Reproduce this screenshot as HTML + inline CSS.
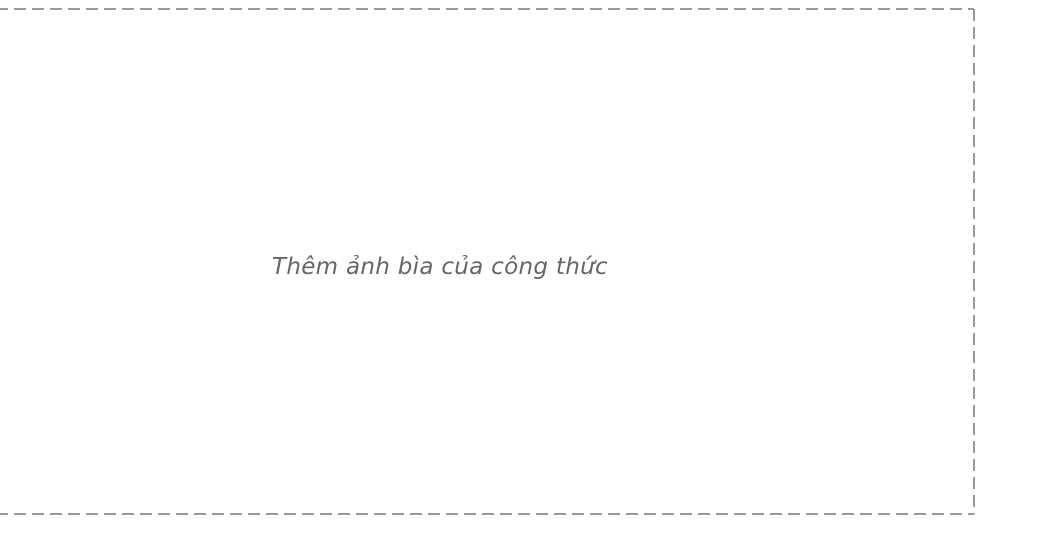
<!DOCTYPE html>
<html><head><style>
html,body{margin:0;padding:0;background:#fff;width:1061px;height:539px;overflow:hidden}
svg{position:absolute;left:0;top:0}
.t{position:absolute;left:272px;top:254px;font-family:"DejaVu Sans ExtraLight","DejaVu Sans",sans-serif;font-style:italic;font-weight:200;font-size:23px;color:#666;letter-spacing:0.3px;white-space:nowrap}
</style></head><body>
<svg width="1061" height="539">
<g stroke="#999" stroke-width="2" stroke-dasharray="12 6" fill="none">
<line x1="-4" y1="9" x2="974" y2="9"/>
<line x1="974" y1="9" x2="974" y2="514"/>
<line x1="-4" y1="514" x2="974" y2="514"/>
</g>
</svg>
<div class="t">Thêm ảnh bìa của công thức</div>
</body></html>
